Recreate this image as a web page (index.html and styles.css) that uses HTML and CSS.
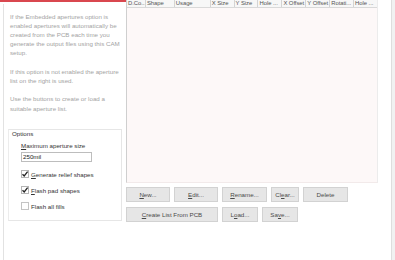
FILE: index.html
```html
<!DOCTYPE html>
<html>
<head>
<meta charset="utf-8">
<link rel="stylesheet" href="styles.css">
</head>
<body>
<div class="window">
  <div class="left">
    <div class="tabbar"></div>
    <div class="leftbody">
      <div class="desc">
        <p>If the Embedded apertures option is<br>enabled apertures will automatically be<br>created from the PCB each time you<br>generate the output files using this CAM<br>setup.</p>
        <p>If this option is not enabled the aperture<br>list on the right is used.</p>
        <p>Use the buttons to create or load a<br>suitable aperture list.</p>
      </div>
      <div class="group">
        <div class="group-title">Options</div>
        <div class="group-body">
          <div class="field-label"><u>M</u>aximum aperture size</div>
          <div class="input">250mil</div>
          <div class="check-row">
            <svg class="cb" width="8" height="8" viewBox="0 0 8 8"><rect x="0.5" y="0.5" width="7" height="7" fill="#fff" stroke="#b5b5b5"/><path d="M1.5 4.2 L3.2 6 L6.6 1.6" fill="none" stroke="#222" stroke-width="1.3"/></svg>
            <span><u>G</u>enerate relief shapes</span>
          </div>
          <div class="check-row">
            <svg class="cb" width="8" height="8" viewBox="0 0 8 8"><rect x="0.5" y="0.5" width="7" height="7" fill="#fff" stroke="#b5b5b5"/><path d="M1.5 4.2 L3.2 6 L6.6 1.6" fill="none" stroke="#222" stroke-width="1.3"/></svg>
            <span><u>F</u>lash pad shapes</span>
          </div>
          <div class="check-row">
            <svg class="cb" width="8" height="8" viewBox="0 0 8 8"><rect x="0.5" y="0.5" width="7" height="7" fill="#fff" stroke="#c4c4c4"/></svg>
            <span>Flash all fills</span>
          </div>
        </div>
      </div>
    </div>
  </div>
  <div class="right">
    <div class="table">
      <div class="thead">
        <div class="th c1">D.Co...</div>
        <div class="th c2">Shape</div>
        <div class="th c3">Usage</div>
        <div class="th c4">X Size</div>
        <div class="th c4">Y Size</div>
        <div class="th c4">Hole ...</div>
        <div class="th c4">X Offset</div>
        <div class="th c4">Y Offset</div>
        <div class="th c4">Rotati...</div>
        <div class="th c5">Hole ...</div>
      </div>
      <div class="tbody"></div>
    </div>
    <div class="buttons">
      <div class="btn-row">
        <div class="btn w44"><u>N</u>ew...</div>
        <div class="btn w44"><u>E</u>dit...</div>
        <div class="btn w45"><u>R</u>ename...</div>
        <div class="btn w28">Cl<u>e</u>ar...</div>
        <div class="btn w45">Delete</div>
      </div>
      <div class="btn-row">
        <div class="btn w92"><u>C</u>reate List From PCB</div>
        <div class="btn w36">L<u>o</u>ad...</div>
        <div class="btn w36">Sa<u>v</u>e...</div>
      </div>
    </div>
  </div>
  <div class="spacer"></div>
  <div class="edge"></div>
</div>
</body>
</html>
```

FILE: styles.css
```css
html, body {
  margin: 0;
  padding: 0;
  background: #ffffff;
}
body {
  width: 395px;
  height: 260px;
  overflow: hidden;
  font-family: "Liberation Sans", Arial, sans-serif;
  font-size: 6.2px;
}
u {
  text-decoration: underline;
  text-underline-offset: 1px;
}
.window {
  display: flex;
  height: 260px;
}
.left {
  width: 126px;
  display: flex;
  flex-direction: column;
}
.tabbar {
  height: 2px;
  background: #d9474f;
}
.leftbody {
  flex: 1;
  margin-top: 2px;
  margin-left: 3px;
  border-left: 1px solid #e2e2e2;
  padding-top: 7.5px;
}
.desc {
  padding-left: 6px;
  color: #a3a3a3;
  line-height: 9.2px;
}
.desc p {
  margin: 0 0 9.2px 0;
  white-space: nowrap;
}
.desc p:last-child {
  margin-bottom: 0;
}
.group {
  margin-top: 16px;
  margin-left: 4px;
  width: 112px;
  height: 90px;
  border: 1px solid #e6e6e6;
  border-left-color: #ececec;
}
.group-title {
  padding-left: 3px;
  line-height: 8px;
  color: #333;
}
.group-body {
  padding-left: 12px;
  color: #333;
}
.field-label {
  margin-top: 3px;
  line-height: 9px;
}
.input {
  margin-top: 2px;
  width: 68px;
  height: 8px;
  border: 1px solid #bdbdbd;
  padding-left: 1px;
  line-height: 8px;
  color: #222;
}
.check-row {
  display: flex;
  align-items: center;
  gap: 2px;
  height: 9px;
  margin-top: 8px;
}
.check-row + .check-row {
  margin-top: 7px;
}
.cb {
  display: block;
  flex: none;
}
.right {
  width: 252px;
  display: flex;
  flex-direction: column;
}
.table {
  border-left: 1px solid #cfcfcf;
  border-right: 1px solid #ececec;
  border-bottom: 1px solid #f2eaea;
}
.thead {
  display: flex;
  height: 7px;
  border-bottom: 1px solid #d9d9d9;
  background: #f7f7f7;
}
.th {
  box-sizing: border-box;
  border-right: 1px solid #d4d4d4;
  padding-left: 1px;
  line-height: 6px;
  font-size: 5.9px;
  letter-spacing: -0.05px;
  color: #555;
  white-space: nowrap;
  overflow: hidden;
}
.c1 { width: 19px; }
.c2 { width: 29px; }
.c3 { width: 36px; }
.c4 { width: 24px; }
.c5 { width: 23px; border-right: none; }
.tbody {
  height: 174px;
  background: #fdf8f8;
}
.buttons {
  margin-top: 4px;
  display: flex;
  flex-direction: column;
  gap: 5px;
}
.btn-row {
  display: flex;
  gap: 4px;
}
.btn {
  box-sizing: border-box;
  height: 15px;
  border: 1px solid #d2d2d2;
  background: #e6e6e6;
  color: #4a4a4a;
  display: flex;
  align-items: center;
  justify-content: center;
  white-space: nowrap;
}
.w44 { width: 44px; }
.w45 { width: 45px; }
.w28 { width: 28px; }
.w92 { width: 92px; }
.w36 { width: 36px; }
.spacer {
  flex: 1;
}
.edge {
  width: 3px;
  border-left: 1px solid #dedede;
  background: #f1f1f1;
}
```
